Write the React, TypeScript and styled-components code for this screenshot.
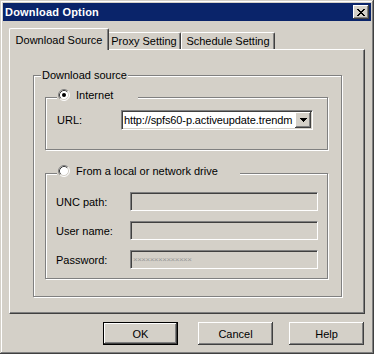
import React from 'react';
import styled, { createGlobalStyle } from 'styled-components';

const GlobalStyle = createGlobalStyle`
  html, body {
    margin: 0;
    padding: 0;
    background: #d4d0c8;
  }
  body {
    font-family: "Liberation Sans", Arial, sans-serif;
    font-size: 11px;
    color: #000;
  }
`;

const raised = `
  box-shadow: inset -1px -1px 0 #404040, inset 1px 1px 0 #fff,
    inset -2px -2px 0 #808080, inset 2px 2px 0 #d4d0c8;
`;

const Window = styled.div`
  width: 374px;
  height: 354px;
  box-sizing: border-box;
  padding: 3px;
  background: #d4d0c8;
  box-shadow: inset -1px -1px 0 #404040, inset 1px 1px 0 #d4d0c8,
    inset -2px -2px 0 #808080, inset 2px 2px 0 #fff;
`;

const TitleBar = styled.div`
  height: 18px;
  background: #0a246a;
  display: flex;
  align-items: center;
  justify-content: space-between;
  padding: 0 2px;
`;

const Title = styled.span`
  color: #fff;
  font-weight: bold;
  font-size: 11px;
  letter-spacing: 0.2px;
  white-space: nowrap;
`;

const CloseButton = styled.div`
  width: 16px;
  height: 14px;
  box-sizing: border-box;
  background: #d4d0c8;
  display: flex;
  align-items: center;
  justify-content: center;
  ${raised}
`;

const Body = styled.div`
  padding: 7px 6px 0;
`;

const TabStrip = styled.div`
  display: flex;
  align-items: flex-end;
  height: 21px;
  padding-left: 2px;
`;

const Tab = styled.div<{ $active?: boolean; $w: number }>`
  box-sizing: border-box;
  width: ${p => p.$w + (p.$active ? 4 : 0)}px;
  height: ${p => (p.$active ? 22 : 17)}px;
  margin: ${p => (p.$active ? '0 -2px -1px' : '0')};
  position: relative;
  z-index: ${p => (p.$active ? 2 : 1)};
  background: #d4d0c8;
  border-top: 1px solid #fff;
  border-left: 1px solid #fff;
  border-right: 1px solid #404040;
  border-radius: 2px 2px 0 0;
  box-shadow: inset -1px 0 0 #808080;
  display: flex;
  align-items: center;
  justify-content: center;
  white-space: nowrap;
`;

const TabPanel = styled.div`
  box-sizing: border-box;
  height: 265px;
  border-top: 1px solid #fff;
  border-left: 1px solid #fff;
  border-right: 1px solid #404040;
  border-bottom: 1px solid #404040;
  box-shadow: inset -1px -1px 0 #808080;
  padding: 19px 0 0 23px;
`;

const GroupBox = styled.fieldset<{ $w?: number; $mt?: number }>`
  box-sizing: border-box;
  width: ${p => (p.$w ? `${p.$w}px` : 'auto')};
  margin: ${p => p.$mt ?? 0}px 0 0;
  padding: 0;
  min-width: 0;
  border: 1px solid #808080;
  box-shadow: inset 1px 1px 0 #fff, 1px 1px 0 #fff;
`;

const Legend = styled.legend`
  margin-left: 7px;
  padding: 0 1px;
  line-height: 13px;
  background: #d4d0c8;
`;

const RadioLegend = styled.legend<{ $w: number }>`
  box-sizing: border-box;
  width: ${p => p.$w}px;
  height: 17px;
  margin-left: 11px;
  padding: 0 0 0 1px;
  background: #d4d0c8;
  display: flex;
  align-items: flex-start;
  gap: 6px;
  line-height: 13px;
  white-space: nowrap;
`;

const GroupBody = styled.div<{ $pad: string }>`
  padding: ${p => p.$pad};
`;

const Rows = styled.div`
  display: flex;
  flex-direction: column;
  gap: 10px;
`;

const Row = styled.div`
  display: flex;
  align-items: center;
`;

const Label = styled.span<{ $w: number }>`
  width: ${p => p.$w}px;
  white-space: nowrap;
`;

const sunken = `
  border: 1px solid;
  border-color: #808080 #fff #fff #808080;
  box-shadow: inset 1px 1px 0 #404040, inset -1px -1px 0 #d4d0c8;
`;

const Combo = styled.div`
  box-sizing: border-box;
  width: 192px;
  height: 20px;
  background: #fff;
  ${sunken}
  padding: 1px;
  display: flex;
  align-items: center;
`;

const ComboText = styled.span`
  flex: 1;
  min-width: 0;
  white-space: nowrap;
  padding-left: 1px;
  letter-spacing: -0.12px;
`;

const DropButton = styled.div`
  flex: none;
  box-sizing: border-box;
  width: 16px;
  height: 16px;
  background: #d4d0c8;
  display: flex;
  align-items: center;
  justify-content: center;
  ${raised}
`;

const TextField = styled.div`
  box-sizing: border-box;
  width: 188px;
  height: 19px;
  background: #d4d0c8;
  ${sunken}
  padding: 0 2px;
  display: flex;
  align-items: center;
  overflow: hidden;
`;

const Masked = styled.span`
  color: #999;
  font-size: 8px;
  letter-spacing: -0.5px;
  white-space: nowrap;
`;

const ButtonRow = styled.div`
  display: flex;
  justify-content: flex-end;
  gap: 16px;
  margin-top: 8px;
  padding-right: 1px;
`;

const PushButton = styled.button<{ $default?: boolean }>`
  box-sizing: border-box;
  width: 75px;
  height: 23px;
  padding: 0;
  border: none;
  background: #d4d0c8;
  font-family: "Liberation Sans", Arial, sans-serif;
  font-size: 11px;
  color: #000;
  margin-right: ${p => (p.$default ? 4 : 0)}px;
  box-shadow: ${p =>
    p.$default
      ? 'inset 0 0 0 1px #000, inset -2px -2px 0 #404040, inset 2px 2px 0 #fff, inset -3px -3px 0 #808080, inset 3px 3px 0 #d4d0c8'
      : 'inset -1px -1px 0 #404040, inset 1px 1px 0 #fff, inset -2px -2px 0 #808080, inset 2px 2px 0 #d4d0c8'};
`;

function CloseGlyph() {
  const rows = [0, 1, 2, 3, 4, 5, 6];
  return (
    <svg width="8" height="7" viewBox="0 0 8 7" shapeRendering="crispEdges">
      {rows.map(i => (
        <React.Fragment key={i}>
          <rect x={i} y={i} width="2" height="1" fill="#000" />
          <rect x={6 - i} y={i} width="2" height="1" fill="#000" />
        </React.Fragment>
      ))}
    </svg>
  );
}

function ArrowGlyph() {
  return (
    <svg width="7" height="4" viewBox="0 0 7 4" shapeRendering="crispEdges">
      <rect x="0" y="0" width="7" height="1" fill="#000" />
      <rect x="1" y="1" width="5" height="1" fill="#000" />
      <rect x="2" y="2" width="3" height="1" fill="#000" />
      <rect x="3" y="3" width="1" height="1" fill="#000" />
    </svg>
  );
}

function Radio({ checked }: { checked?: boolean }) {
  return (
    <svg width="12" height="12" viewBox="0 0 12 12" style={{ flex: 'none' }}>
      <circle cx="6" cy="6" r="5" fill="#fff" />
      <path d="M2.11 9.89 A5.5 5.5 0 0 1 9.89 2.11" stroke="#808080" fill="none" />
      <path d="M9.89 2.11 A5.5 5.5 0 0 1 2.11 9.89" stroke="#fff" fill="none" />
      <path d="M2.82 9.18 A4.5 4.5 0 0 1 9.18 2.82" stroke="#404040" fill="none" />
      <path d="M9.18 2.82 A4.5 4.5 0 0 1 2.82 9.18" stroke="#d4d0c8" fill="none" />
      {checked && <circle cx="6" cy="6" r="2" fill="#000" />}
    </svg>
  );
}

export default function App() {
  return (
    <>
      <GlobalStyle />
      <Window>
        <TitleBar>
          <Title>Download Option</Title>
          <CloseButton>
            <CloseGlyph />
          </CloseButton>
        </TitleBar>
        <Body>
          <TabStrip>
            <Tab $active $w={96}>Download Source</Tab>
            <Tab $w={74}>Proxy Setting</Tab>
            <Tab $w={94}>Schedule Setting</Tab>
          </TabStrip>
          <TabPanel>
            <GroupBox $w={309}>
              <Legend>Download source</Legend>
              <GroupBody $pad="7px 13px 17px 11px">
                <GroupBox>
                  <RadioLegend $w={81}>
                    <Radio checked />
                    <span>Internet</span>
                  </RadioLegend>
                  <GroupBody $pad="4px 0 19px 11px">
                    <Row>
                      <Label $w={64}>URL:</Label>
                      <Combo>
                        <ComboText>http://spfs60-p.activeupdate.trendm</ComboText>
                        <DropButton>
                          <ArrowGlyph />
                        </DropButton>
                      </Combo>
                    </Row>
                  </GroupBody>
                </GroupBox>
                <GroupBox $mt={15}>
                  <RadioLegend $w={183}>
                    <Radio />
                    <span>From a local or network drive</span>
                  </RadioLegend>
                  <GroupBody $pad="10px 0 9px 10px">
                    <Rows>
                      <Row>
                        <Label $w={74}>UNC path:</Label>
                        <TextField />
                      </Row>
                      <Row>
                        <Label $w={74}>User name:</Label>
                        <TextField />
                      </Row>
                      <Row>
                        <Label $w={74}>Password:</Label>
                        <TextField>
                          <Masked>××××××××××××××</Masked>
                        </TextField>
                      </Row>
                    </Rows>
                  </GroupBody>
                </GroupBox>
              </GroupBody>
            </GroupBox>
          </TabPanel>
          <ButtonRow>
            <PushButton $default>OK</PushButton>
            <PushButton>Cancel</PushButton>
            <PushButton>Help</PushButton>
          </ButtonRow>
        </Body>
      </Window>
    </>
  );
}
